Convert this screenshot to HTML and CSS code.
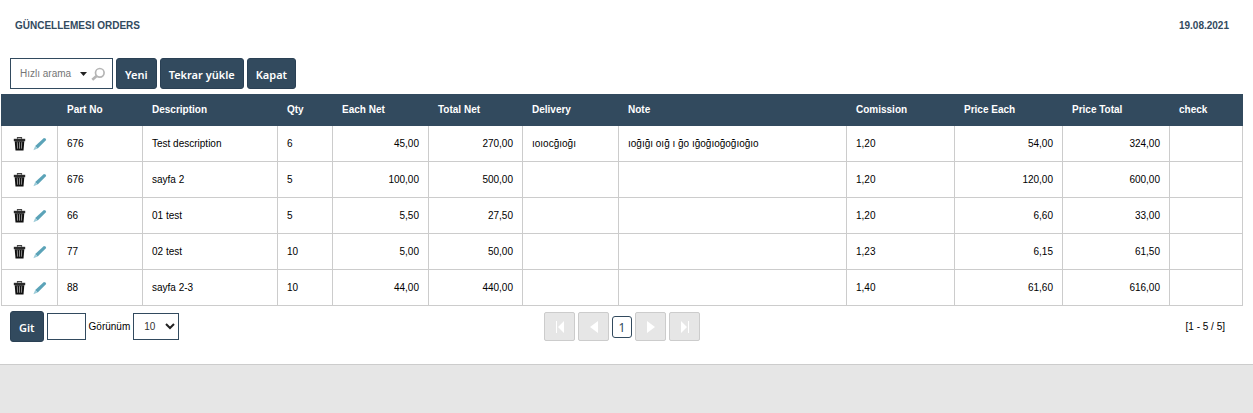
FILE: index.html
```html
<!DOCTYPE html>
<html lang="tr">

<head>
    <meta charset="UTF-8" />
    <meta name="viewport" content="width=device-width, initial-scale=1.0" />
    <title>Orders</title>
    <link rel="stylesheet" href="styles.css">
</head>

<body>
    <svg class="sprite" aria-hidden="true">
        <symbol id="icon-trash" viewBox="0 0 14 14">
            <path d="M4.500 1.800V.7h4v1.100" fill="none" stroke="#444" stroke-width="1.200" />
            <path d="M.8 1.800h11.400v2.400H.8z" fill="#2a2a2a" />
            <path d="M1.700 4.200h9.600l-.8 9.300h-8z" fill="#111" />
            <path d="M4.300 5.200l.3 6.500M6.500 5.200v6.500M8.700 5.200l-.3 6.500" stroke="#aaa" stroke-width=".8" />
        </symbol>
        <symbol id="icon-pencil" viewBox="0 0 14 14">
            <path d="M10.900.9q2.200.1 2.300 2.200l-8.500 8.300-2.500-2.500z" fill="#5ba3b8" />
            <path d="M2.200 8.900l2.500 2.500L.4 13.300z" fill="#9ccbd8" />
        </symbol>
    </svg>

    <main class="page">
        <header class="title">
            <span>GÜNCELLEMESI ORDERS</span>
            <span>19.08.2021</span>
        </header>

        <div class="toolbar">
            <div class="search">
                <input type="text" class="search-input" placeholder="Hızlı arama" aria-label="Hızlı arama" />
                <button type="button" class="search-btn" aria-label="Alanlar">
                    <svg width="7" height="4" viewBox="0 0 7 4"><path d="M0 0h7L3.500 4z" fill="#222" /></svg>
                </button>
                <button type="button" class="search-btn" aria-label="Ara">
                    <svg width="14" height="14" viewBox="0 0 14 14" fill="none" stroke="#b5b5b5">
                        <circle cx="8.800" cy="5.800" r="4.300" stroke-width="1.700" />
                        <path d="M5.600 9L1.300 12.800" stroke-width="2.600" />
                    </svg>
                </button>
            </div>
            <button type="button" class="btn">Yeni</button>
            <button type="button" class="btn">Tekrar yükle</button>
            <button type="button" class="btn">Kapat</button>
        </div>

        <table class="grid">
            <colgroup>
                <col class="col-actions" />
                <col class="col-part" />
                <col class="col-desc" />
                <col class="col-qty" />
                <col class="col-net" />
                <col class="col-total" />
                <col class="col-net" />
                <col />
                <col class="col-price" />
                <col class="col-price" />
                <col class="col-price-total" />
                <col class="col-check" />
            </colgroup>
            <thead>
                <tr>
                    <th></th>
                    <th>Part No</th>
                    <th>Description</th>
                    <th>Qty</th>
                    <th>Each Net</th>
                    <th>Total Net</th>
                    <th>Delivery</th>
                    <th>Note</th>
                    <th>Comission</th>
                    <th>Price Each</th>
                    <th>Price Total</th>
                    <th>check</th>
                </tr>
            </thead>
            <tbody>
                <tr>
                    <td>
                        <div class="actions">
                            <button type="button" aria-label="Sil"><svg><use href="#icon-trash" /></svg></button>
                            <button type="button" aria-label="Düzenle"><svg><use href="#icon-pencil" /></svg></button>
                        </div>
                    </td>
                    <td>676</td>
                    <td>Test description</td>
                    <td>6</td>
                    <td class="num">45,00</td>
                    <td class="num">270,00</td>
                    <td>ıoıocğıoğı</td>
                    <td>ıoğığı oığ ı ğo ığoğıoğoğıoğıo</td>
                    <td>1,20</td>
                    <td class="num">54,00</td>
                    <td class="num">324,00</td>
                    <td></td>
                </tr>
                <tr>
                    <td>
                        <div class="actions">
                            <button type="button" aria-label="Sil"><svg><use href="#icon-trash" /></svg></button>
                            <button type="button" aria-label="Düzenle"><svg><use href="#icon-pencil" /></svg></button>
                        </div>
                    </td>
                    <td>676</td>
                    <td>sayfa 2</td>
                    <td>5</td>
                    <td class="num">100,00</td>
                    <td class="num">500,00</td>
                    <td></td>
                    <td></td>
                    <td>1,20</td>
                    <td class="num">120,00</td>
                    <td class="num">600,00</td>
                    <td></td>
                </tr>
                <tr>
                    <td>
                        <div class="actions">
                            <button type="button" aria-label="Sil"><svg><use href="#icon-trash" /></svg></button>
                            <button type="button" aria-label="Düzenle"><svg><use href="#icon-pencil" /></svg></button>
                        </div>
                    </td>
                    <td>66</td>
                    <td>01 test</td>
                    <td>5</td>
                    <td class="num">5,50</td>
                    <td class="num">27,50</td>
                    <td></td>
                    <td></td>
                    <td>1,20</td>
                    <td class="num">6,60</td>
                    <td class="num">33,00</td>
                    <td></td>
                </tr>
                <tr>
                    <td>
                        <div class="actions">
                            <button type="button" aria-label="Sil"><svg><use href="#icon-trash" /></svg></button>
                            <button type="button" aria-label="Düzenle"><svg><use href="#icon-pencil" /></svg></button>
                        </div>
                    </td>
                    <td>77</td>
                    <td>02 test</td>
                    <td>10</td>
                    <td class="num">5,00</td>
                    <td class="num">50,00</td>
                    <td></td>
                    <td></td>
                    <td>1,23</td>
                    <td class="num">6,15</td>
                    <td class="num">61,50</td>
                    <td></td>
                </tr>
                <tr>
                    <td>
                        <div class="actions">
                            <button type="button" aria-label="Sil"><svg><use href="#icon-trash" /></svg></button>
                            <button type="button" aria-label="Düzenle"><svg><use href="#icon-pencil" /></svg></button>
                        </div>
                    </td>
                    <td>88</td>
                    <td>sayfa 2-3</td>
                    <td>10</td>
                    <td class="num">44,00</td>
                    <td class="num">440,00</td>
                    <td></td>
                    <td></td>
                    <td>1,40</td>
                    <td class="num">61,60</td>
                    <td class="num">616,00</td>
                    <td></td>
                </tr>
            </tbody>
        </table>

        <div class="footer">
            <div class="goto">
                <button type="button" class="btn">Git</button>
                <input type="text" class="goto-input" aria-label="Sayfa" />
                <label for="view">Görünüm</label>
                <select id="view" class="view">
                    <option selected>10</option>
                    <option>20</option>
                    <option>50</option>
                </select>
            </div>
            <nav class="pager">
                <button type="button" class="page-btn" disabled aria-label="İlk">
                    <svg viewBox="0 0 12 14"><path d="M2 1h1v12H2zM10 1v12L4 7z" /></svg>
                </button>
                <button type="button" class="page-btn" disabled aria-label="Önceki">
                    <svg viewBox="0 0 12 14"><path d="M10 1v12L2 7z" /></svg>
                </button>
                <a href="#" class="current">1</a>
                <button type="button" class="page-btn" disabled aria-label="Sonraki">
                    <svg viewBox="0 0 12 14"><path d="M2 1v12l8-6z" /></svg>
                </button>
                <button type="button" class="page-btn" disabled aria-label="Son">
                    <svg viewBox="0 0 12 14"><path d="M2 1v12l6-6zM9 1h1v12H9z" /></svg>
                </button>
            </nav>
            <span class="summary">[1 - 5 / 5]</span>
        </div>
    </main>
</body>

</html>
```
FILE: styles.css
```css
* {
    box-sizing: border-box;
}

body {
    margin: 0;
    min-height: 100vh;
    background-color: #e6e6e6;
    font-family: "Liberation Sans", Arial, sans-serif;
    font-size: 10px;
    line-height: 12px;
    color: #000;
}

button,
input,
select {
    font: inherit;
    margin: 0;
}

.sprite {
    display: none;
}

.page {
    padding: 20px 10px 22px 1px;
    background-color: #fff;
    border-bottom: 1px solid #ccc;
}

.title {
    display: flex;
    justify-content: space-between;
    padding: 0 14px;
    color: #324a5e;
    font-weight: bold;
}

.toolbar {
    display: flex;
    gap: 3px;
    padding: 26px 9px 5px;
}

.search {
    display: flex;
    align-items: center;
    width: 103px;
    height: 31px;
    padding: 0 5px 0 9px;
    border: 1px solid #324a5e;
}

.search-input {
    flex: 1;
    min-width: 0;
    padding: 0;
    border: 0;
    outline: none;
    color: #666;
}

.search-input::placeholder {
    color: #757575;
}

.search-btn {
    display: flex;
    padding: 0 2px;
    border: 0;
    background: none;
    cursor: pointer;
}

.btn {
    height: 31px;
    padding: 2px 8px 0;
    border: 1px solid #2a4054;
    border-radius: 3px;
    background-color: #324a5e;
    color: #fff;
    font-family: "Noto Sans", "Open Sans", sans-serif;
    font-size: 11px;
    font-weight: 600;
    cursor: pointer;
}

/* table */
.grid {
    width: 100%;
    table-layout: fixed;
    border-collapse: separate;
    border-spacing: 0;
}

.col-actions {
    width: 57px;
}

.col-part {
    width: 85px;
}

.col-desc {
    width: 135px;
}

.col-qty {
    width: 55px;
}

.col-net {
    width: 96px;
}

.col-total {
    width: 94px;
}

.col-price {
    width: 108px;
}

.col-price-total {
    width: 107px;
}

.col-check {
    width: 73px;
}

.grid th {
    height: 32px;
    padding: 0 9px;
    background-color: #324a5e;
    color: #fff;
    text-align: left;
}

.grid td {
    height: 36px;
    padding: 0 9px;
    border-right: 1px solid #ccc;
    border-bottom: 1px solid #ccc;
}

.grid td:first-child {
    border-left: 1px solid #ccc;
}

.grid .num {
    text-align: right;
}

.actions {
    display: flex;
    gap: 6px;
    padding-left: 2px;
}

.actions button {
    display: flex;
    padding: 0;
    border: 0;
    background: none;
    cursor: pointer;
}

.actions svg {
    width: 14px;
    height: 14px;
}

/* footer */
.footer {
    display: grid;
    grid-template-columns: 1fr auto 1fr;
    align-items: center;
    padding: 5px 9px 0;
}

.goto {
    display: flex;
    align-items: center;
    gap: 3px;
}

.goto-input {
    width: 39px;
    height: 27px;
    border: 1px solid #324a5e;
}

.view {
    width: 46px;
    height: 27px;
    padding: 0 3px 0 10px;
    border: 1px solid #324a5e;
    border-radius: 0;
    appearance: none;
    background: #fff url("data:image/svg+xml,%3Csvg xmlns='http://www.w3.org/2000/svg' viewBox='0 0 10 7'%3E%3Cpath d='M1 1l4 4 4-4' fill='none' stroke='%23222' stroke-width='2'/%3E%3C/svg%3E") no-repeat right 3px center / 10px 7px;
    color: #333;
}

.pager {
    display: flex;
    align-items: center;
    gap: 3px;
}

.page-btn {
    display: flex;
    align-items: center;
    justify-content: center;
    width: 31px;
    height: 29px;
    padding: 0;
    border: 1px solid #ccc;
    border-radius: 2px;
    background-color: #e6e6e6;
}

.page-btn svg {
    width: 12px;
    height: 14px;
    fill: #fff;
}

.current {
    width: 20px;
    height: 22px;
    border: 1px solid #324a5e;
    border-radius: 3px;
    color: #324a5e;
    font-family: "Noto Sans", sans-serif;
    font-size: 12px;
    line-height: 21px;
    text-align: center;
    text-decoration: none;
}

.summary {
    padding-right: 9px;
    text-align: right;
}
```
